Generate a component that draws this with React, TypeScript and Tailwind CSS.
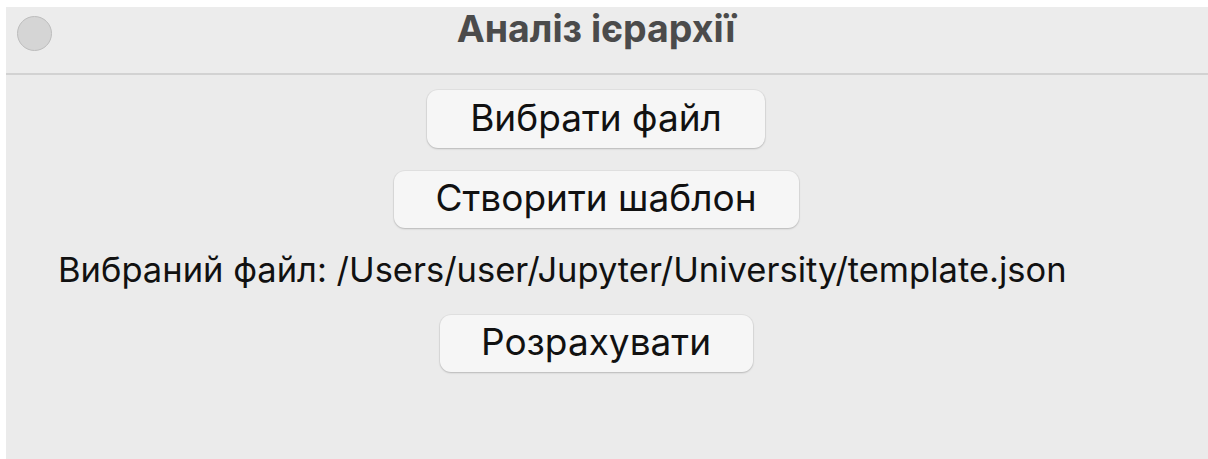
import React from "react";

const font = { fontFamily: "Inter, 'Noto Sans', sans-serif" };

function MacButton({ label, size }: { label: string; size: string }) {
  return (
    <button
      className={`flex items-center justify-center rounded-[11px] bg-[#f6f6f6] pb-[3px] text-[37px] leading-[40px] text-[#111] shadow-[0_1px_2px_rgba(0,0,0,0.18),0_0_0_1px_rgba(0,0,0,0.04)] ${size}`}
    >
      {label}
    </button>
  );
}

export default function App() {
  return (
    <div className="min-h-screen bg-white pl-[6px] pt-[7px]" style={font}>
      <div className="flex h-[452px] w-[1202px] flex-col bg-[#ebebeb]">
        {/* title bar */}
        <div className="h-[68px] border-b-2 border-[#d2d2d2] bg-[#ececec]">
          <div className="grid w-[1180px] grid-cols-[60px_1fr_60px]">
            <div className="pl-[11px] pt-[9px]">
              <div className="h-[35px] w-[35px] rounded-full border border-[#bdbdbd] bg-[#d5d5d5]" />
            </div>
            <div className="pt-[2px] text-center text-[37.5px] font-bold leading-[40px] text-[#4b4b4b]">
              Аналіз ієрархії
            </div>
            <div />
          </div>
        </div>

        {/* controls */}
        <div className="flex w-[1180px] flex-col items-center">
          <div className="mt-[15px]">
            <MacButton label="Вибрати файл" size="w-[338px] h-[58px]" />
          </div>
          <div className="mt-[23px]">
            <MacButton label="Створити шаблон" size="w-[405px] h-[57px]" />
          </div>
          <div className="mt-[22px] self-start pl-[52px] text-[34.5px] leading-[40px] text-[#111]">
            Вибраний файл: /Users/user/Jupyter/University/template.json
          </div>
          <div className="mt-[25px]">
            <MacButton label="Розрахувати" size="w-[313px] h-[57px]" />
          </div>
        </div>
      </div>
    </div>
  );
}
